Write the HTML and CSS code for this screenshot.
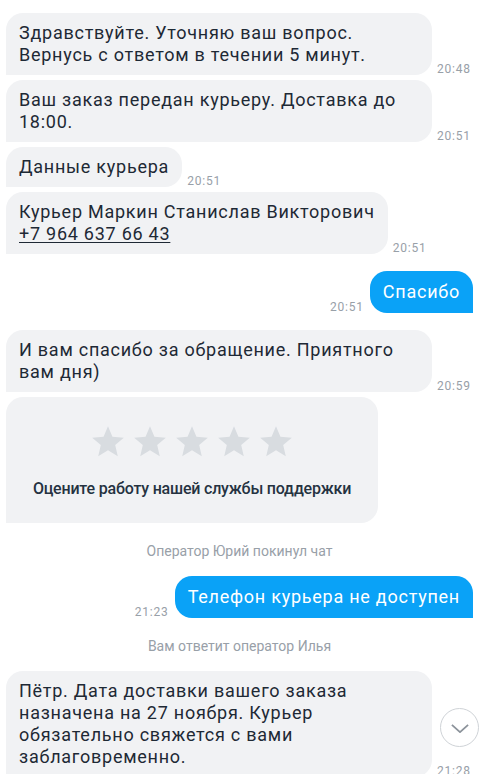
FILE: index.html
```html
<!DOCTYPE html>
<html lang="ru">
<head>
  <meta charset="UTF-8">
  <meta name="viewport" content="width=device-width, initial-scale=1.0">
  <title>Чат поддержки</title>
  <link rel="stylesheet" href="styles.css">
</head>
<body>
  <div class="screen">
    <div class="chat">
      <div class="msg in">
        <div class="bubble">Здравствуйте. Уточняю ваш вопрос. Вернусь с ответом в течении 5 минут.</div>
        <span class="time">20:48</span>
      </div>
      <div class="msg in same">
        <div class="bubble">Ваш заказ передан курьеру. Доставка до 18:00.</div>
        <span class="time">20:51</span>
      </div>
      <div class="msg in same">
        <div class="bubble">Данные курьера</div>
        <span class="time">20:51</span>
      </div>
      <div class="msg in same">
        <div class="bubble">Курьер Маркин Станислав Викторович<br><a href="tel:+79646376643">+7 964 637 66 43</a></div>
        <span class="time">20:51</span>
      </div>

      <div class="msg out">
        <span class="time">20:51</span>
        <div class="bubble">Спасибо</div>
      </div>

      <div class="msg in">
        <div class="bubble">И вам спасибо за обращение. Приятного вам дня)</div>
        <span class="time">20:59</span>
      </div>
      <div class="msg in same">
        <div class="rating">
          <div class="stars">
            <svg viewBox="0 0 24 24"><path d="M12 17.27L18.18 21l-1.64-7.03L22 9.24l-7.19-.61L12 2 9.19 8.63 2 9.24l5.46 4.73L5.82 21z"/></svg>
            <svg viewBox="0 0 24 24"><path d="M12 17.27L18.18 21l-1.64-7.03L22 9.24l-7.19-.61L12 2 9.19 8.63 2 9.24l5.46 4.73L5.82 21z"/></svg>
            <svg viewBox="0 0 24 24"><path d="M12 17.27L18.18 21l-1.64-7.03L22 9.24l-7.19-.61L12 2 9.19 8.63 2 9.24l5.46 4.73L5.82 21z"/></svg>
            <svg viewBox="0 0 24 24"><path d="M12 17.27L18.18 21l-1.64-7.03L22 9.24l-7.19-.61L12 2 9.19 8.63 2 9.24l5.46 4.73L5.82 21z"/></svg>
            <svg viewBox="0 0 24 24"><path d="M12 17.27L18.18 21l-1.64-7.03L22 9.24l-7.19-.61L12 2 9.19 8.63 2 9.24l5.46 4.73L5.82 21z"/></svg>
          </div>
          <p>Оцените работу нашей службы поддержки</p>
        </div>
      </div>

      <div class="system">Оператор Юрий покинул чат</div>

      <div class="msg out after-system">
        <span class="time">21:23</span>
        <div class="bubble">Телефон курьера не доступен</div>
      </div>

      <div class="system">Вам ответит оператор Илья</div>

      <div class="msg in after-system">
        <div class="bubble">Пётр. Дата доставки вашего заказа назначена на 27 ноября. Курьер обязательно свяжется с вами заблаговременно.</div>
        <span class="time">21:28</span>
      </div>
    </div>

    <button class="scroll-down" aria-label="Вниз">
      <svg viewBox="0 0 20 10" width="18" height="9"><path d="M1 1l9 8 9-8"/></svg>
    </button>
  </div>
</body>
</html>
```

FILE: styles.css
```css
* {
  box-sizing: border-box;
  margin: 0;
  padding: 0;
}

body {
  background: #fff;
  font-family: Roboto, "Noto Sans", sans-serif;
  color: #1e2935;
}

.screen {
  position: relative;
  height: 100vh;
  overflow: hidden;
}

.chat {
  display: flex;
  flex-direction: column;
  padding: 13px 14px 0 6px;
}

.msg {
  display: flex;
  align-items: flex-end;
  margin-top: 17px;
}

.msg:first-child {
  margin-top: 0;
}

.msg.same {
  margin-top: 5px;
}

.msg.after-system {
  margin-top: 17px;
}

.msg.out {
  justify-content: flex-end;
}

.bubble {
  max-width: 426px;
  padding: 9px 13px;
  font-size: 18px;
  line-height: 22px;
  letter-spacing: 0.75px;
  background: #f1f2f4;
  border-radius: 17px 17px 17px 0;
}

.bubble a {
  color: inherit;
  text-decoration: underline;
  text-underline-offset: 2px;
}

.out .bubble {
  padding: 10px 13px;
  background: #0aa2f7;
  color: #fff;
  border-radius: 17px 17px 0 17px;
}

.time {
  flex-shrink: 0;
  font-size: 12px;
  line-height: 14px;
  letter-spacing: 0.8px;
  color: #98a0a8;
  margin: 0 0 -1px 5px;
}

.out .time {
  margin: 0 6px -1px 0;
}

.rating {
  width: 372px;
  padding: 26px 0 25px;
  background: #f1f2f4;
  border-radius: 17px 17px 17px 0;
  text-align: center;
}

.stars {
  display: flex;
  justify-content: center;
  gap: 4px;
}

.stars svg {
  width: 38px;
  height: 38px;
  fill: #d8dce0;
}

.rating p {
  margin-top: 19px;
  font-size: 16px;
  font-weight: 500;
  line-height: 18px;
  letter-spacing: -0.2px;
  color: #253241;
}

.system {
  margin-top: 20px;
  text-align: center;
  font-size: 14px;
  line-height: 16px;
  color: #98a0a8;
}

.scroll-down {
  position: absolute;
  right: 8px;
  bottom: 27px;
  width: 39px;
  height: 39px;
  border: 1px solid #cfd3d7;
  border-radius: 50%;
  background: #fff;
  display: flex;
  align-items: center;
  justify-content: center;
  cursor: pointer;
}

.scroll-down svg {
  fill: none;
  stroke: #8c939b;
  stroke-width: 2;
  margin-top: 2px;
}
```
